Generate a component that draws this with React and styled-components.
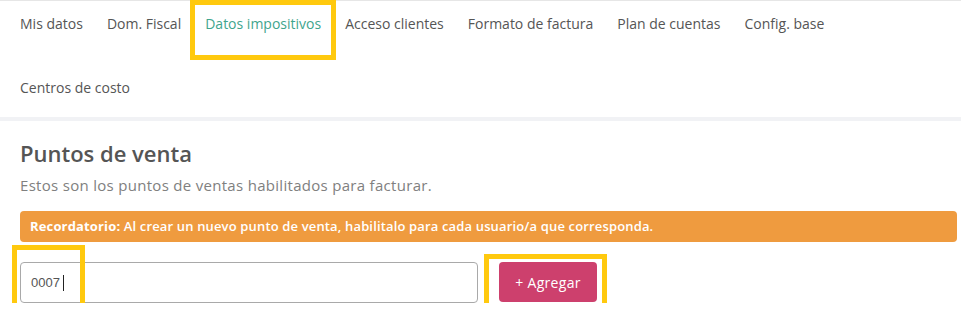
import styled, { createGlobalStyle } from 'styled-components';

const GlobalStyle = createGlobalStyle`
  body {
    margin: 0;
    background: #fff;
    font-family: "Open Sans", "Noto Sans", sans-serif;
  }
`;

const Page = styled.div`
  width: 961px;
`;

const Nav = styled.nav`
  display: flex;
  flex-wrap: wrap;
  row-gap: 18px;
  padding: 0 8px 6px;
  border-top: 1px solid #e6e6e6;
  border-bottom: 4px solid #f1f2f5;
`;

const Tab = styled.a`
  position: relative;
  padding: 12px;
  font-size: 14px;
  line-height: 22px;
  color: ${p => (p.$active ? '#3fa58d' : '#555')};
  cursor: pointer;
`;

// marco amarillo de anotación sobre los elementos resaltados
const Highlight = styled.span`
  position: absolute;
  top: ${p => p.$top}px;
  left: ${p => p.$left}px;
  right: ${p => p.$right}px;
  bottom: ${p => p.$bottom}px;
  border: 5px solid #ffc90e;
  pointer-events: none;
`;

const Section = styled.section`
  padding: 18px 4px 0 20px;
`;

const Title = styled.h2`
  margin: 0;
  font-size: 22px;
  line-height: 28px;
  font-weight: 600;
  color: #555;
`;

const Subtitle = styled.p`
  margin: 8px 0 0;
  font-size: 15px;
  line-height: 20px;
  letter-spacing: 0.3px;
  color: #808080;
`;

const Alert = styled.div`
  margin-top: 16px;
  padding: 7px 10px;
  background: #ef9b3f;
  border-radius: 4px;
  color: #fff;
  font-size: 13px;
  line-height: 17px;
  letter-spacing: 0.15px;
  font-weight: 600;
  b { font-weight: 700; }
`;

const Row = styled.div`
  display: flex;
  align-items: flex-start;
  gap: 21px;
  margin-top: 20px;
`;

const InputWrap = styled.div`
  position: relative;
  width: 458px;
`;

const Input = styled.input`
  box-sizing: border-box;
  width: 100%;
  height: 41px;
  padding: 0 10px;
  border: 1px solid #a9a9a9;
  border-radius: 4px;
  font-family: "Liberation Sans", Arial, sans-serif;
  font-size: 13px;
  color: #555;
  outline: none;
`;

const Caret = styled.span`
  position: absolute;
  left: 43px;
  top: 13px;
  width: 1px;
  height: 16px;
  background: #222;
`;

const ButtonWrap = styled.div`
  position: relative;
`;

const AddButton = styled.button`
  height: 40px;
  width: 98px;
  border: none;
  border-radius: 4px;
  background: #cd406d;
  color: #fff;
  font-family: inherit;
  font-size: 14px;
  font-weight: 500;
  letter-spacing: 0.3px;
  cursor: pointer;
`;

const tabs = [
  'Mis datos',
  'Dom. Fiscal',
  'Datos impositivos',
  'Acceso clientes',
  'Formato de factura',
  'Plan de cuentas',
  'Config. base',
  'Centros de costo',
];

export default function App() {
  return (
    <Page>
      <GlobalStyle />
      <Nav>
        {tabs.map(t => (
          <Tab key={t} $active={t === 'Datos impositivos'}>
            {t}
            {t === 'Datos impositivos' && <Highlight $top={-1} $left={-3} $right={-3} $bottom={-13} />}
          </Tab>
        ))}
      </Nav>
      <Section>
        <Title>Puntos de venta</Title>
        <Subtitle>Estos son los puntos de ventas habilitados para facturar.</Subtitle>
        <Alert>
          <b>Recordatorio:</b> Al crear un nuevo punto de venta, habilitalo para cada usuario/a que corresponda.
        </Alert>
        <Row>
          <InputWrap>
            <Input defaultValue="0007" />
            <Caret />
            <Highlight $top={-17} $left={-8} $right={393} $bottom={-6} />
          </InputWrap>
          <ButtonWrap>
            <AddButton>+ Agregar</AddButton>
            <Highlight $top={-8} $left={-15} $right={-10} $bottom={-10} />
          </ButtonWrap>
        </Row>
      </Section>
    </Page>
  );
}
